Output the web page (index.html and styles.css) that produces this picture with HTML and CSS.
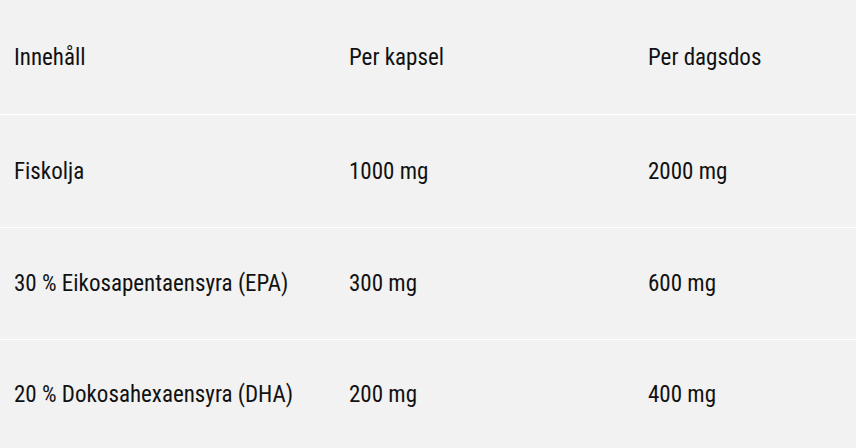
FILE: index.html
```html
<!DOCTYPE html>
<html lang="sv">
<head>
<meta charset="utf-8">
<link rel="stylesheet" href="styles.css">
</head>
<body>
<div class="table">
  <div class="row">
    <div class="cell">Innehåll</div>
    <div class="cell">Per kapsel</div>
    <div class="cell">Per dagsdos</div>
  </div>
  <div class="row">
    <div class="cell">Fiskolja</div>
    <div class="cell">1000 mg</div>
    <div class="cell">2000 mg</div>
  </div>
  <div class="row">
    <div class="cell">30 % Eikosapentaensyra (EPA)</div>
    <div class="cell">300 mg</div>
    <div class="cell">600 mg</div>
  </div>
  <div class="row">
    <div class="cell">20 % Dokosahexaensyra (DHA)</div>
    <div class="cell">200 mg</div>
    <div class="cell">400 mg</div>
  </div>
</div>
</body>
</html>
```
FILE: styles.css
```css
html, body {
  margin: 0;
  padding: 0;
  background: #f2f2f2;
}
body {
  font-family: "Roboto Condensed", "Liberation Sans", Arial, sans-serif;
  font-size: 23px;
  color: #111;
}
.table {
  display: flex;
  flex-direction: column;
}
.row {
  box-sizing: border-box;
  display: grid;
  grid-template-columns: 335px 299px 1fr;
  height: 113px;
  align-items: center;
  padding-left: 14px;
  border-top: 1px solid #ffffff;
}
.row:first-child {
  height: 114px;
  border-top: none;
}
.row:nth-child(3) {
  height: 112px;
}
.row:last-child {
  height: 109px;
}
.cell {
  line-height: 1;
}
```
